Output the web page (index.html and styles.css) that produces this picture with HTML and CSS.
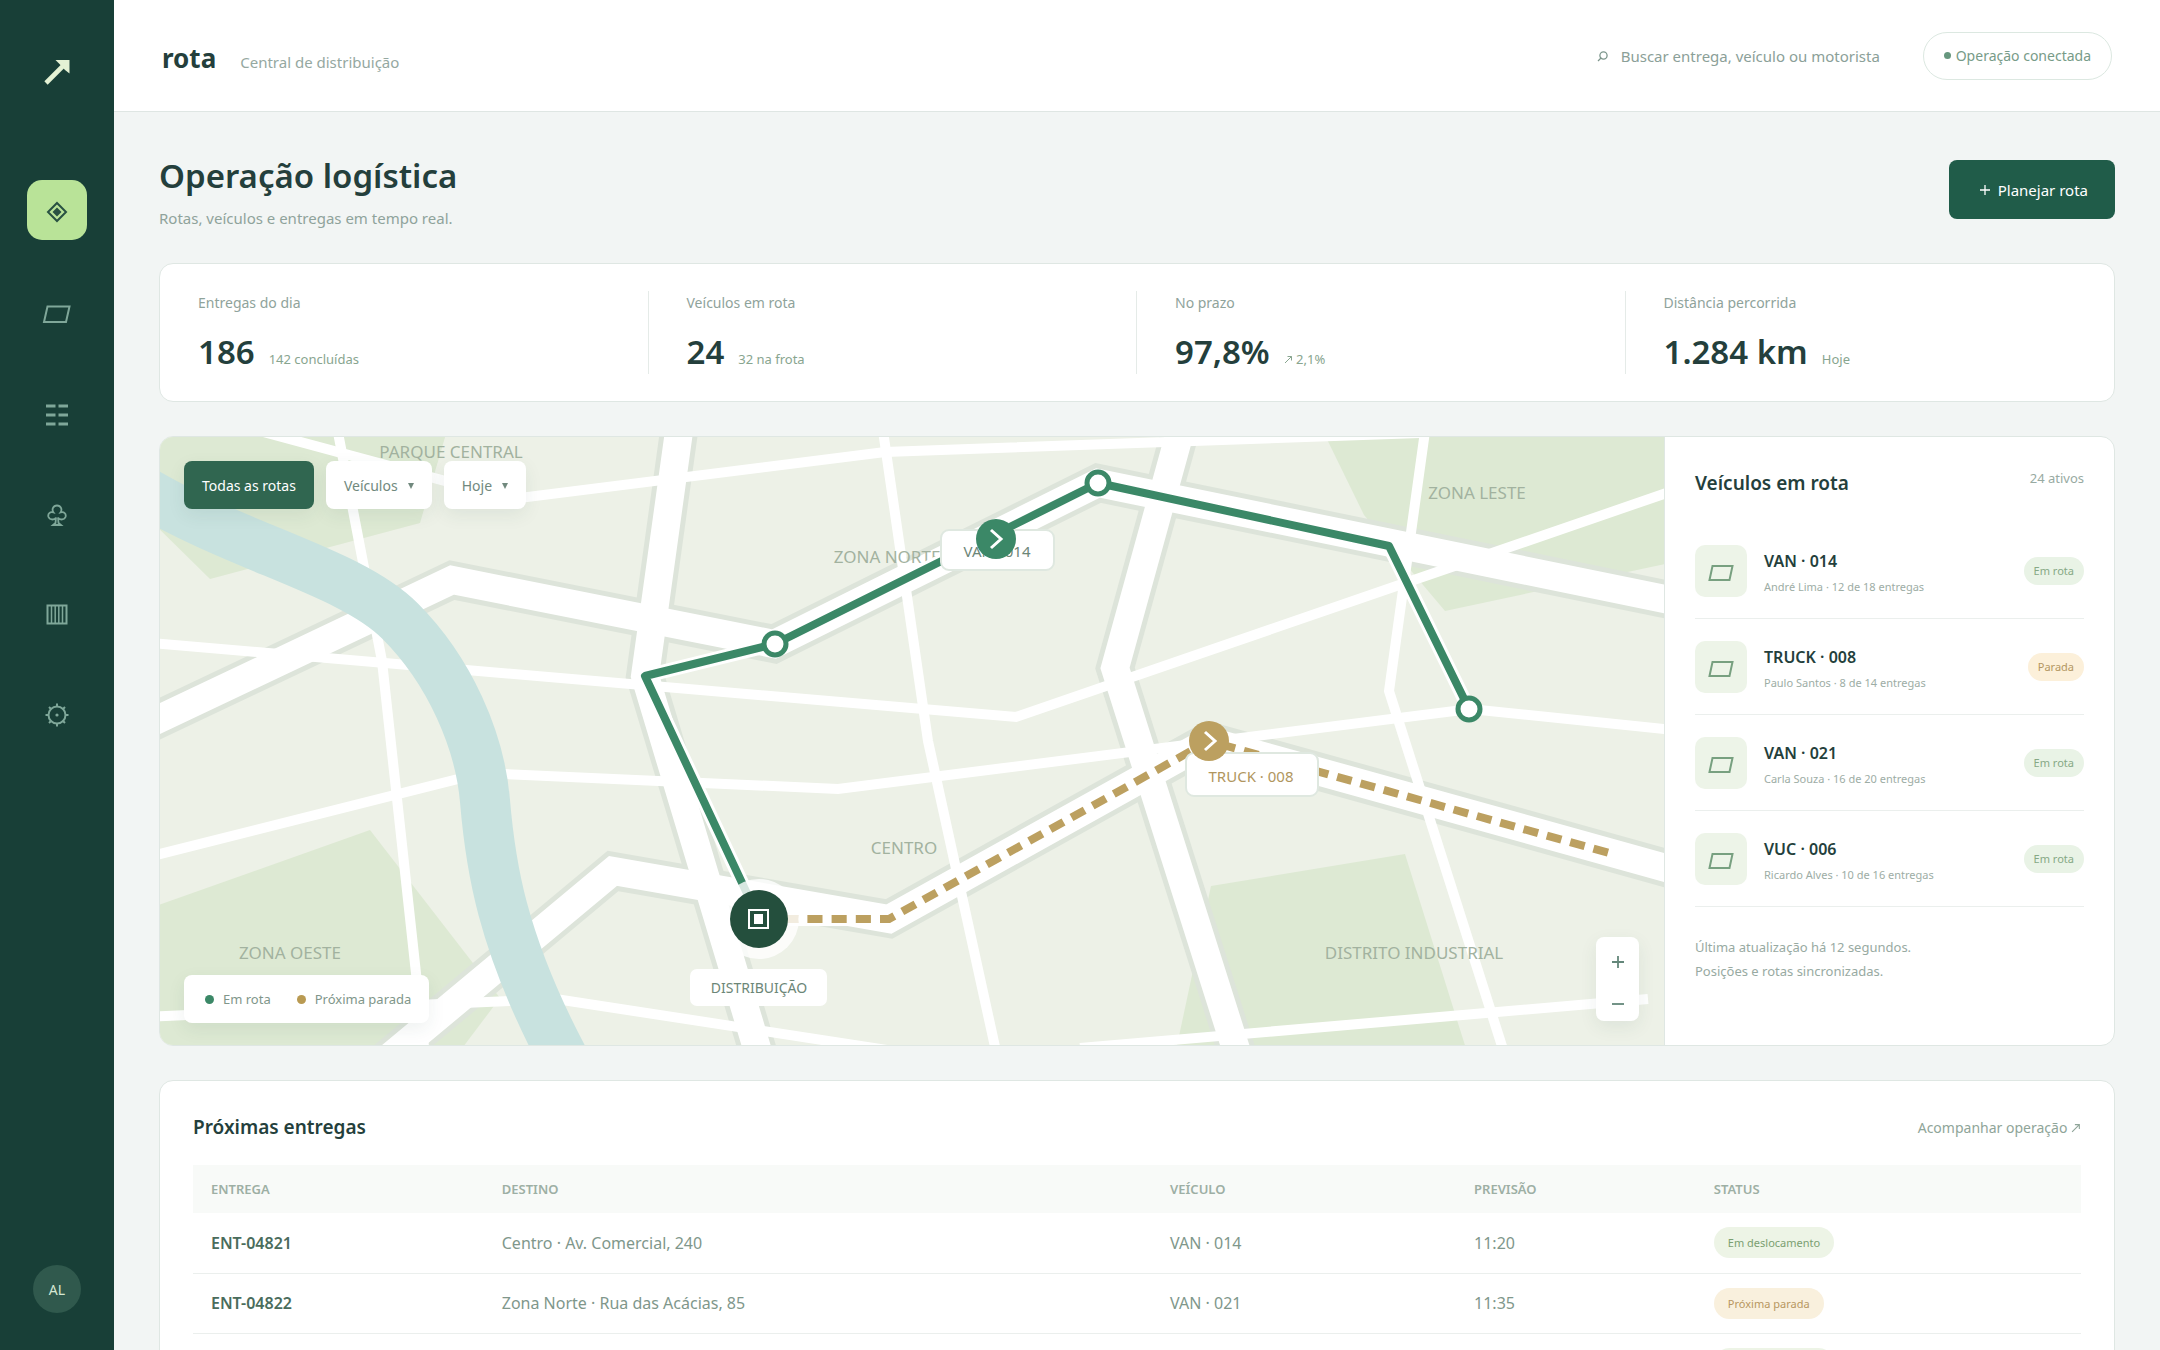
FILE: index.html
```html
<!DOCTYPE html>
<html lang="pt-BR">
<head>
<meta charset="utf-8">
<meta name="viewport" content="width=device-width, initial-scale=1">
<title>rota · Operação logística</title>
<link rel="stylesheet" href="styles.css">
</head>
<body>
<div class="shell">
  <aside class="sidebar">
    <a class="brand-mark" href="#" aria-label="rota">
      <svg width="28" height="28" viewBox="0 0 28 28"><path d="M3 25 22 6" fill="none" stroke="currentColor" stroke-width="4.600"/><path d="M12.500 2H26.500V15.500L22 12 16.500 6Z" fill="currentColor"/></svg>
    </a>
    <nav class="nav" aria-label="Principal">
      <a class="nav-item active" href="#" aria-label="Mapa"><svg width="24" height="24" viewBox="0 0 24 24"><path d="M12 3 21 12 12 21 3 12Z" fill="none" stroke="currentColor" stroke-width="2"/><path d="M12 7.500 16.500 12 12 16.500 7.500 12Z" fill="currentColor"/></svg></a>
      <a class="nav-item" href="#" aria-label="Veículos"><svg width="30" height="20" viewBox="0 0 30 20"><path d="M5.500 1.500H27.500L24 17H2Z" fill="none" stroke="currentColor" stroke-width="2"/></svg></a>
      <a class="nav-item" href="#" aria-label="Entregas"><svg width="24" height="24" viewBox="0 0 24 24"><path d="M1 3H10.500M13.500 3H23M1 12H10.500M13.500 12H23M1 21H10.500M13.500 21H23" fill="none" stroke="currentColor" stroke-width="3"/></svg></a>
      <a class="nav-item" href="#" aria-label="Motoristas"><svg width="24" height="24" viewBox="0 0 24 24"><path d="M11 14.500C10 17 5 17.500 3.500 14 2.500 10.500 5 8.500 8.500 9.500 6.500 6.500 8 2.500 12 2.500S17.500 6.500 15.500 9.500C19 8.500 21.500 10.500 20.500 14 19 17.500 14 17 13 14.500L13.500 20 16 22H8L10.500 20Z" fill="none" stroke="currentColor" stroke-width="1.800"/></svg></a>
      <a class="nav-item" href="#" aria-label="Relatórios"><svg width="24" height="24" viewBox="0 0 24 24"><path d="M2.500 2.500H21.500V20.500H2.500Z" fill="none" stroke="currentColor" stroke-width="2"/><path d="M6.500 2V21M10.200 2V21M13.800 2V21M17.500 2V21" stroke="currentColor" stroke-width="1.500"/></svg></a>
      <a class="nav-item" href="#" aria-label="Ajustes"><svg width="24" height="24" viewBox="0 0 24 24"><circle cx="12" cy="12" r="8.500" fill="none" stroke="currentColor" stroke-width="2"/><circle cx="12" cy="12" r="1.600" fill="currentColor"/><path d="M12 .5V4M12 20V23.500M.5 12H4M20 12H23.500M4 4 6.500 6.500M17.500 17.500 20 20M20 4 17.500 6.500M6.500 17.500 4 20" stroke="currentColor" stroke-width="2"/></svg></a>
    </nav>
    <button class="avatar" type="button">AL</button>
  </aside>

  <div class="content">
    <header class="topbar">
      <div class="brand"><strong class="brand-name">rota</strong><span class="brand-sub">Central de distribuição</span></div>
      <div class="topbar-right">
        <label class="search">
          <svg width="12" height="12" viewBox="0 0 12 12"><circle cx="6.500" cy="5.500" r="3.600" fill="none" stroke="currentColor" stroke-width="1.300"/><path d="M4 8 1 11" stroke="currentColor" stroke-width="1.300"/></svg>
          <input type="text" placeholder="Buscar entrega, veículo ou motorista" aria-label="Buscar entrega, veículo ou motorista">
        </label>
        <button class="connection" type="button"><span class="connection-dot"></span>Operação conectada</button>
      </div>
    </header>

    <main class="main">
      <section class="page-head">
        <div>
          <h1>Operação logística</h1>
          <p>Rotas, veículos e entregas em tempo real.</p>
        </div>
        <button class="primary" type="button"><svg width="10" height="10" viewBox="0 0 10 10"><path d="M5 0V10M0 5H10" stroke="currentColor" stroke-width="1.300"/></svg>Planejar rota</button>
      </section>

      <section class="card stats">
        <div class="stat"><span class="stat-label">Entregas do dia</span><div class="stat-row"><strong>186</strong><small>142 concluídas</small></div></div>
        <div class="stat"><span class="stat-label">Veículos em rota</span><div class="stat-row"><strong>24</strong><small>32 na frota</small></div></div>
        <div class="stat"><span class="stat-label">No prazo</span><div class="stat-row"><strong>97,8%</strong><small><svg width="9" height="9" viewBox="0 0 9 9"><path d="M1 8 7.500 1.500M3.500 1.500H7.500V5.500" fill="none" stroke="currentColor"/></svg> 2,1%</small></div></div>
        <div class="stat"><span class="stat-label">Distância percorrida</span><div class="stat-row"><strong>1.284 km</strong><small>Hoje</small></div></div>
      </section>

      <section class="card operation">
        <div class="map">
          <svg class="map-canvas" viewBox="160 436 1504 608" preserveAspectRatio="xMidYMid slice" role="img" aria-label="Mapa das rotas">
            <rect class="land" x="160" y="436" width="1504" height="608"/>
            <g class="parks">
              <path d="M150 426H448L420 522 210 578 150 519Z"/>
              <path d="M1321 426H1674V561L1445 610 1364 514Z"/>
              <path d="M370 829 500 997 457 1054H150V907Z"/>
              <path d="M1211 885 1405 853 1468 1054H1175Z"/>
            </g>
            <g class="road-casing">
              <path d="M140 727 452 579 774 643 1098 482 1684 602"/>
              <path d="M681 416 645 675 762 1064"/>
              <path d="M1182 424 1115 667 1241 1064"/>
              <path d="M380 1064 613 870 889 918 1209 740 1684 872"/>
            </g>
            <g class="road-main">
              <path d="M140 727 452 579 774 643 1098 482 1684 602"/>
              <path d="M681 416 645 675 762 1064"/>
              <path d="M1182 424 1115 667 1241 1064"/>
              <path d="M380 1064 613 870 889 918 1209 740 1684 872"/>
            </g>
            <g class="road-minor">
              <path d="M140 641 1016 716 1684 486"/>
              <path d="M140 858 482 772 838 788 1470 708 1684 730"/>
              <path d="M245 426 512 498 885 451 1420 432"/>
              <path d="M335 416 382 660 426 1064"/>
              <path d="M140 1016 556 998 900 1051"/>
              <path d="M881 416 928 740 999 1064"/>
              <path d="M1427 416 1389 690 1508 1064"/>
              <path d="M1080 1047 1648 998"/>
            </g>
            <path class="river" d="M140 488C240 548 350 570 400 620S480 740 485 800 500 940 567 1064"/>
            <g class="area-label">
              <text x="451" y="457">PARQUE CENTRAL</text>
              <text x="887" y="562">ZONA NORTE</text>
              <text x="1477" y="498">ZONA LESTE</text>
              <text x="904" y="853">CENTRO</text>
              <text x="1414" y="958">DISTRITO INDUSTRIAL</text>
              <text x="290" y="958">ZONA OESTE</text>
            </g>
            <path class="route-halo" d="M759 918 645 675 775 643 1098 482 1389 545 1469 708"/>
            <path class="route-halo" d="M759 918H889L1209 740 1609 852"/>
            <path class="route-active" d="M759 918 645 675 775 643 1098 482 1389 545 1469 708"/>
            <path class="route-next" stroke-dasharray="15.100 9.100" d="M759 918H889L1209 740 1609 852"/>
            <g class="stop">
              <circle cx="775" cy="643" r="11"/>
              <circle cx="1098" cy="482" r="11"/>
              <circle cx="1469" cy="708" r="11"/>
            </g>
            <rect class="tag" x="941" y="529" width="113" height="40" rx="8"/>
            <text class="tag-text" x="997" y="556">VAN · 014</text>
            <circle class="vehicle" cx="996" cy="538" r="20"/>
            <path class="chevron" d="M991 529 1001 538 991 547"/>
            <rect class="tag" x="1186" y="752" width="132" height="43" rx="8"/>
            <text class="tag-text gold" x="1251" y="781">TRUCK · 008</text>
            <circle class="vehicle gold" cx="1209" cy="740" r="20"/>
            <path class="chevron" d="M1205 731 1215 740 1205 749"/>
            <circle class="hub-halo" cx="759" cy="918" r="40"/>
            <circle class="hub" cx="759" cy="918" r="29"/>
            <path class="hub-icon" d="M749 909H768V927H749Z"/>
            <rect class="hub-core" x="754" y="913" width="9" height="10"/>
            <rect class="hub-tag" x="690" y="968" width="137" height="37" rx="7"/>
            <text class="hub-text" x="759" y="992">DISTRIBUIÇÃO</text>
          </svg>
          <div class="filters">
            <button class="filter selected" type="button">Todas as rotas</button>
            <button class="filter" type="button">Veículos<span class="caret"></span></button>
            <button class="filter" type="button">Hoje<span class="caret"></span></button>
          </div>
          <div class="legend">
            <span><i class="dot"></i>Em rota</span>
            <span><i class="dot gold"></i>Próxima parada</span>
          </div>
          <div class="zoom">
            <button type="button" aria-label="Aproximar"><svg width="12" height="12" viewBox="0 0 12 12"><path d="M6 0V12M0 6H12" stroke="currentColor" stroke-width="1.800"/></svg></button>
            <button type="button" aria-label="Afastar"><svg width="12" height="12" viewBox="0 0 12 12"><path d="M0 6H12" stroke="currentColor" stroke-width="1.800"/></svg></button>
          </div>
        </div>
        <aside class="fleet">
          <div class="fleet-head"><h2>Veículos em rota</h2><span>24 ativos</span></div>
          <ul class="fleet-list">
            <li><span class="fleet-icon"><svg width="26" height="18" viewBox="0 0 26 18"><path d="M4.500 2H24.500L21.500 16H1.500Z" fill="none" stroke="currentColor" stroke-width="2"/></svg></span><div class="fleet-info"><strong>VAN · 014</strong><small>André Lima · 12 de 18 entregas</small></div><span class="badge">Em rota</span></li>
            <li><span class="fleet-icon"><svg width="26" height="18" viewBox="0 0 26 18"><path d="M4.500 2H24.500L21.500 16H1.500Z" fill="none" stroke="currentColor" stroke-width="2"/></svg></span><div class="fleet-info"><strong>TRUCK · 008</strong><small>Paulo Santos · 8 de 14 entregas</small></div><span class="badge amber">Parada</span></li>
            <li><span class="fleet-icon"><svg width="26" height="18" viewBox="0 0 26 18"><path d="M4.500 2H24.500L21.500 16H1.500Z" fill="none" stroke="currentColor" stroke-width="2"/></svg></span><div class="fleet-info"><strong>VAN · 021</strong><small>Carla Souza · 16 de 20 entregas</small></div><span class="badge">Em rota</span></li>
            <li><span class="fleet-icon"><svg width="26" height="18" viewBox="0 0 26 18"><path d="M4.500 2H24.500L21.500 16H1.500Z" fill="none" stroke="currentColor" stroke-width="2"/></svg></span><div class="fleet-info"><strong>VUC · 006</strong><small>Ricardo Alves · 10 de 16 entregas</small></div><span class="badge">Em rota</span></li>
          </ul>
          <p class="fleet-note">Última atualização há 12 segundos.<br>Posições e rotas sincronizadas.</p>
        </aside>
      </section>

      <section class="card deliveries">
        <div class="deliveries-head"><h2>Próximas entregas</h2><a href="#">Acompanhar operação <svg width="10" height="10" viewBox="0 0 9 9"><path d="M1 8 7.500 1.500M3.500 1.500H7.500V5.500" fill="none" stroke="currentColor"/></svg></a></div>
        <table>
          <colgroup><col class="c-id"><col class="c-dest"><col class="c-veh"><col class="c-eta"><col class="c-status"></colgroup>
          <thead><tr><th>ENTREGA</th><th>DESTINO</th><th>VEÍCULO</th><th>PREVISÃO</th><th>STATUS</th></tr></thead>
          <tbody>
            <tr><td class="id">ENT-04821</td><td>Centro · Av. Comercial, 240</td><td>VAN · 014</td><td>11:20</td><td><span class="status">Em deslocamento</span></td></tr>
            <tr><td class="id">ENT-04822</td><td>Zona Norte · Rua das Acácias, 85</td><td>VAN · 021</td><td>11:35</td><td><span class="status amber">Próxima parada</span></td></tr>
            <tr><td class="id">ENT-04823</td><td>Zona Leste</td><td>VAN · 014</td><td>11:50</td><td><span class="status">Em deslocamento</span></td></tr>
          </tbody>
        </table>
      </section>
    </main>
  </div>
</div>
</body>
</html>
```
FILE: styles.css
```css
* { box-sizing: border-box; }

body {
  margin: 0;
  background: #f2f5f4;
  color: #243f3c;
  font-family: "Noto Sans", "Open Sans", sans-serif;
  font-size: 16px;
}

h1, h2, p, ul { margin: 0; padding: 0; }
button, input { font: inherit; color: inherit; }
button { border: 0; background: none; padding: 0; cursor: pointer; }
a { color: inherit; text-decoration: none; }
svg { flex: none; }

.shell { display: flex; height: 100vh; overflow: hidden; }

/* Sidebar */
.sidebar {
  flex: 0 0 114px;
  display: flex;
  flex-direction: column;
  align-items: center;
  padding: 58px 0 37px;
  background: #183f37;
  color: #7fa799;
}
.brand-mark { display: flex; height: 28px; color: #e4f2d4; }
.nav { display: flex; flex-direction: column; gap: 40px; margin-top: 94px; }
.nav-item { display: flex; align-items: center; justify-content: center; width: 60px; height: 60px; padding-top: 4px; border-radius: 15px; }
.nav-item:not(.active) { padding-top: 9px; }
.nav-item.active { background: #b9e398; color: #285142; }
.avatar { margin-top: auto; width: 48px; height: 48px; border-radius: 50%; background: #30594d; color: #d5e7d2; font-size: 14px; }

/* Top bar */
.content { flex: 1; min-width: 0; overflow-y: auto; scrollbar-width: none; }
.topbar { display: flex; align-items: center; justify-content: space-between; height: 112px; padding: 0 48px; background: #fff; border-bottom: 1px solid #dfe6e3; }
.brand { display: flex; align-items: baseline; gap: 24px; padding-top: 4px; }
.brand-name { font-size: 26px; font-weight: 700; }
.brand-sub { font-size: 15px; color: #95a8a1; }
.topbar-right { display: flex; align-items: center; gap: 34px; }
.search { display: flex; align-items: center; gap: 12px; color: #7d968c; }
.search input { width: 268px; padding: 0; border: 0; outline: 0; background: none; font-size: 15px; }
.search input::placeholder { color: #8ba098; opacity: 1; }
.connection { display: flex; align-items: center; gap: 5px; height: 48px; padding: 0 20px; border: 1px solid #dce8e1; border-radius: 24px; color: #779b88; font-size: 14px; }
.connection-dot { width: 7px; height: 7px; border-radius: 50%; background: #66977e; }

/* Page */
.main { display: flex; flex-direction: column; gap: 34px; padding: 40px 45px 44px; }
.page-head { display: flex; align-items: flex-start; justify-content: space-between; height: 77px; }
.page-head h1 { font-size: 33px; font-weight: 600; line-height: 48px; }
.page-head p { margin-top: 6px; font-size: 15px; line-height: 24px; color: #8fa39b; }
.primary { display: flex; align-items: center; gap: 8px; height: 59px; margin-top: 8px; padding: 0 27px 0 31px; border-radius: 8px; background: #205c49; color: #fff; font-size: 15px; }

.card { background: #fff; border: 1px solid #dfe7e3; border-radius: 14px; }

/* Indicators */
.stats { display: grid; grid-template-columns: repeat(4, 1fr); padding: 27px 0; }
.stat { padding: 0 38px; border-right: 1px solid #e5ebe8; }
.stat:last-child { border-right: 0; }
.stat-label { display: block; font-size: 14px; line-height: 24px; color: #8fa39b; }
.stat-row { display: flex; align-items: baseline; gap: 14px; margin-top: 13px; height: 46px; line-height: 48px; }
.stat-row strong { font-size: 33px; font-weight: 600; }
.stat-row small { font-size: 13px; color: #88a58f; }

/* Map */
.operation { display: grid; grid-template-columns: minmax(0, 1fr) 450px; overflow: hidden; }
.map { position: relative; min-height: 608px; background: #edf1e7; }
.map-canvas { position: absolute; inset: 0; width: 100%; height: 100%; }
.land { fill: #edf1e7; }
.parks { fill: #dde9d3; }
.road-casing, .road-main, .road-minor, .river, .route-halo, .route-active, .route-next { fill: none; }
.road-casing { stroke: #dde4da; stroke-width: 38px; }
.road-main { stroke: #fff; stroke-width: 28px; }
.road-minor { stroke: #fff; stroke-width: 10px; }
.river { stroke: #c8e2df; stroke-width: 50px; }
.area-label { fill: #a2b29f; font-size: 17px; text-anchor: middle; }
.route-halo { stroke: #fff; stroke-width: 14px; stroke-linejoin: round; }
.route-active { stroke: #3b8867; stroke-width: 8px; stroke-linejoin: round; }
.route-next { stroke: #bca060; stroke-width: 8px; }
.stop { fill: #fff; stroke: #3b8867; stroke-width: 5px; }
.tag { fill: #fff; stroke: #dfe8e0; stroke-width: 2px; }
.tag-text { fill: #6c8677; font-size: 15px; text-anchor: middle; }
.tag-text.gold { fill: #b0965e; }
.vehicle { fill: #3b8867; }
.vehicle.gold { fill: #bca060; }
.chevron { fill: none; stroke: #fff; stroke-width: 3px; }
.hub-halo { fill: #fff; opacity: .8; }
.hub { fill: #244f3d; }
.hub-icon { fill: none; stroke: #fff; stroke-width: 2px; }
.hub-core, .hub-tag { fill: #fff; }
.hub-text { fill: #6c8677; font-size: 14px; text-anchor: middle; }

.filters { position: absolute; top: 24px; left: 24px; display: flex; gap: 12px; }
.filter { display: flex; align-items: center; gap: 10px; height: 48px; padding: 0 18px; border-radius: 8px; background: #fff; box-shadow: 0 6px 18px #24503e14; color: #71897e; font-size: 14px; }
.filter.selected { background: #306650; color: #fff; }
.caret { margin-top: 2px; border: 3px solid transparent; border-top: 6px solid #71897e; border-bottom: 0; }
.legend { position: absolute; bottom: 22px; left: 24px; display: flex; align-items: center; gap: 26px; height: 48px; padding: 0 18px 0 21px; border-radius: 8px; background: #fff; box-shadow: 0 6px 18px #24503e14; color: #80968a; font-size: 13px; }
.legend span { display: flex; align-items: center; gap: 9px; }
.dot { width: 9px; height: 9px; border-radius: 50%; background: #3b8867; }
.dot.gold { background: #b99a52; }
.zoom { position: absolute; right: 25px; bottom: 24px; display: flex; flex-direction: column; width: 43px; border-radius: 8px; background: #fff; box-shadow: 0 6px 18px #24503e14; color: #64877a; }
.zoom button { display: flex; align-items: center; justify-content: center; height: 42px; padding-top: 8px; }

/* Fleet */
.fleet { padding: 31px 30px; border-left: 1px solid #dfe7e3; }
.fleet-head { display: flex; justify-content: space-between; height: 55px; }
.fleet-head h2, .deliveries-head h2 { font-size: 19px; font-weight: 600; line-height: 30px; }
.fleet-head span { font-size: 13px; line-height: 20px; color: #98aaa2; }
.fleet-list { list-style: none; }
.fleet-list li { display: flex; align-items: center; gap: 17px; height: 96px; border-bottom: 1px solid #ebefed; }
.fleet-icon { display: flex; align-items: center; justify-content: center; width: 52px; height: 52px; padding-top: 4px; border-radius: 10px; background: #edf4e8; color: #78a080; }
.fleet-info { flex: 1; display: flex; flex-direction: column; gap: 4px; padding-top: 5px; }
.fleet-info strong { font-size: 16px; font-weight: 600; line-height: 24px; }
.fleet-info small { font-size: 11px; line-height: 20px; color: #9dada5; }
.badge { height: 28px; padding: 0 10px; border-radius: 14px; background: #e9f3e6; color: #86a985; font-size: 11px; line-height: 28px; }
.amber { background: #fcf0da; color: #b39762; }
.fleet-note { margin-top: 28px; font-size: 13px; line-height: 24px; color: #98aaa2; }

/* Deliveries */
.deliveries { padding: 31px 33px; }
.deliveries-head { display: flex; align-items: center; justify-content: space-between; height: 30px; margin-bottom: 23px; }
.deliveries-head a { color: #8fa599; font-size: 14px; }
table { width: 100%; border-collapse: collapse; table-layout: fixed; }
.c-id { width: 15.400%; }
.c-dest { width: 35.400%; }
.c-veh { width: 16.100%; }
.c-eta { width: 12.700%; }
th { height: 48px; padding: 0 18px; background: #f8faf8; color: #9dafa4; font-size: 13px; font-weight: 600; text-align: left; }
td { height: 60px; padding: 0 18px; border-bottom: 1px solid #ebefed; color: #80978b; font-size: 16px; line-height: 18px; }
td.id { color: #4a6c5c; font-weight: 600; }
.status { display: inline-block; padding: 0 14px; border-radius: 16px; background: #edf4e6; color: #7ba071; font-size: 11px; line-height: 31px; vertical-align: middle; }
.status.amber { background: #f9f0dd; color: #b79761; }
```
